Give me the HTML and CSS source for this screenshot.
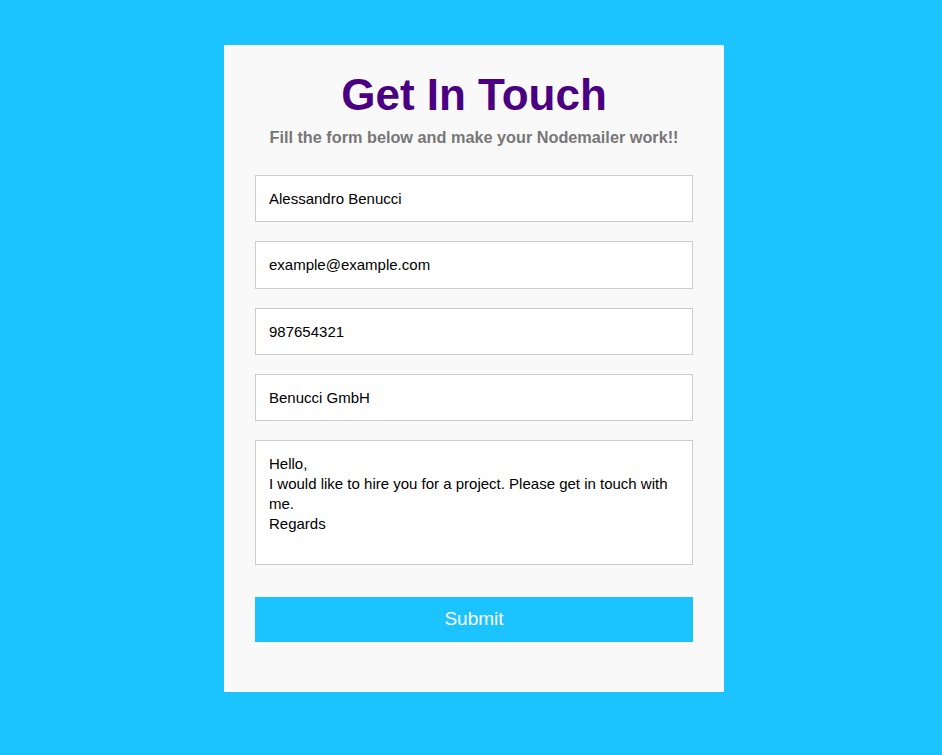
FILE: index.html
```html
<!DOCTYPE html>
<html>
<head>
<meta charset="utf-8">
<link rel="stylesheet" href="styles.css">
</head>
<body>
<div class="page">
  <div class="card">
    <h1 class="title">Get In Touch</h1>
    <p class="subtitle">Fill the form below and make your Nodemailer work!!</p>
    <form class="form">
      <input class="field" type="text" value="Alessandro Benucci">
      <input class="field" type="text" value="example@example.com">
      <input class="field" type="text" value="987654321">
      <input class="field" type="text" value="Benucci GmbH">
      <textarea class="field message">Hello,
I would like to hire you for a project. Please get in touch with me.
Regards</textarea>
      <button class="submit" type="button">Submit</button>
    </form>
  </div>
</div>
</body>
</html>
```

FILE: styles.css
```css
html, body {
  margin: 0;
  padding: 0;
  background: #1bc3ff;
  font-family: "Liberation Sans", Arial, sans-serif;
}
.page {
  display: flex;
  justify-content: center;
  align-items: flex-start;
  padding: 45px 0 0 6px;
}
.card {
  width: 500px;
  box-sizing: border-box;
  background: #f9f9f9;
  padding: 22px 31px 50px;
}
.title {
  margin: 0;
  text-align: center;
  font-size: 44px;
  line-height: 56px;
  font-weight: bold;
  color: #4b0082;
}
.subtitle {
  margin: 4px 0 0;
  text-align: center;
  font-size: 16.25px;
  line-height: 20px;
  font-weight: bold;
  color: #777777;
}
.form {
  display: flex;
  flex-direction: column;
  margin-top: 28px;
}
.field {
  box-sizing: border-box;
  width: 438px;
  height: 47.25px;
  margin: 0 0 19px;
  padding: 0 13px;
  border: 1px solid #cccccc;
  background: #ffffff;
  font-family: "Liberation Sans", Arial, sans-serif;
  font-size: 15px;
  color: #000000;
  outline: none;
}
.message {
  height: 125px;
  padding: 13px 13px;
  line-height: 20px;
  resize: none;
  margin-bottom: 32px;
}
.submit {
  height: 45px;
  width: 438px;
  border: none;
  background: #1bc3ff;
  color: #ffffff;
  font-family: "Liberation Sans", Arial, sans-serif;
  font-size: 19px;
  padding: 0 0 1px;
  cursor: pointer;
}
```
